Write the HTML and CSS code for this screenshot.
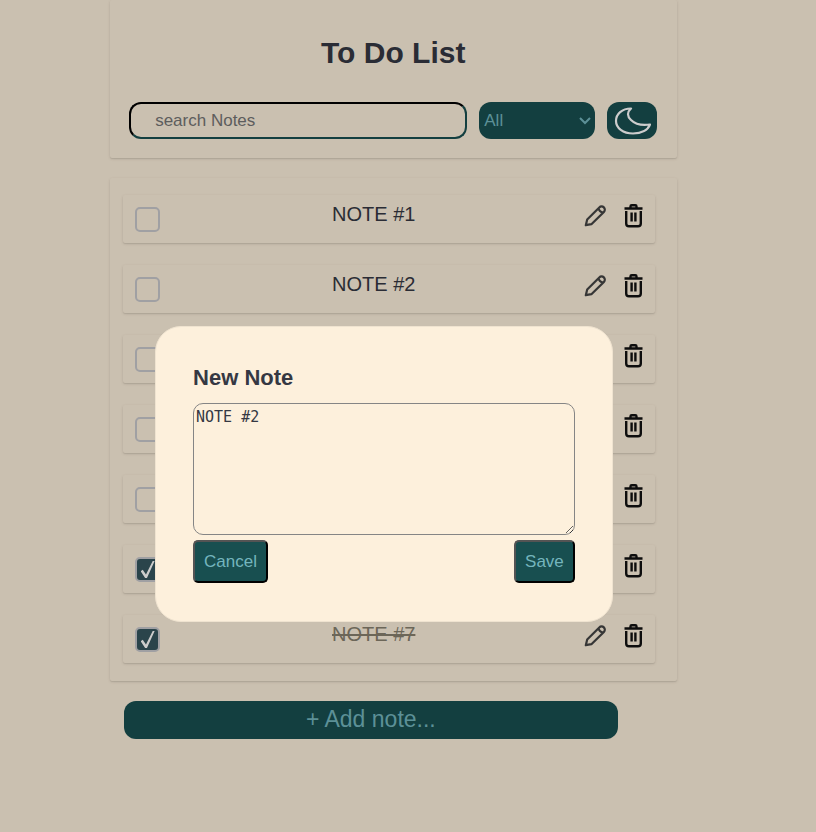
FILE: index.html
```html
<!DOCTYPE html>
<html lang="en">
<head>
<meta charset="utf-8">
<meta name="viewport" content="width=device-width, initial-scale=1">
<title>To Do List</title>
<link rel="stylesheet" href="styles.css">
</head>
<body>
<svg class="sprite" aria-hidden="true">
  <symbol id="pencil" viewBox="0 0 24 24"><path d="M2.800 21.200 4.200 15.600 16.300 3.400a3.200 3.200 0 0 1 4.600 4.500L8.400 20.200ZM15.600 4.200q.3 3.700 4.600 4.300" fill="none" stroke="currentColor" stroke-width="2.200" stroke-linejoin="round"/></symbol>
  <symbol id="trash" viewBox="0 0 24 24"><path d="M3.500 4.500h18M9.500 4V2.500Q9.500 1.300 10.700 1.300h3.600Q15.500 1.300 15.500 2.500V4M5.200 7V19.500Q5.200 22.200 8 22.200h9Q19.800 22.200 19.800 19.500V7M10.600 8.500v9M14.400 8.500v9" fill="none" stroke="currentColor" stroke-width="2.400"/></symbol>
</svg>
<main class="page">
  <header class="panel header">
    <h1 class="title">To Do List</h1>
    <form class="tools">
      <input class="search" type="text" placeholder="search Notes" aria-label="Search notes">
      <div class="filter">
        <select class="filter-select" aria-label="Filter"><option>All</option><option>Complete</option><option>Incomplete</option></select>
        <svg class="chevron" viewBox="0 0 12 8" aria-hidden="true"><path d="M1 1l5 5 5-5" fill="none" stroke="currentColor" stroke-width="2"/></svg>
      </div>
      <button class="theme" type="button" aria-label="Dark mode">
        <svg viewBox="0 0 38 28" aria-hidden="true"><path d="M18 1.500C9 1.500 3 7 3 14s7 12.500 17 12.500c8.500 0 15-3.500 17-9C30 18.500 22.500 17.500 18 13Q12 7 18 1.500Z" fill="none" stroke="currentColor" stroke-width="2.200" stroke-linejoin="round"/></svg>
      </button>
    </form>
  </header>
  <ul class="panel list">
    <li class="note"><input class="check" type="checkbox" id="n1"><label class="text" for="n1">NOTE #1</label><button class="icon" aria-label="Edit"><svg><use href="#pencil"/></svg></button><button class="icon bin" aria-label="Delete"><svg><use href="#trash"/></svg></button></li>
    <li class="note"><input class="check" type="checkbox" id="n2"><label class="text" for="n2">NOTE #2</label><button class="icon" aria-label="Edit"><svg><use href="#pencil"/></svg></button><button class="icon bin" aria-label="Delete"><svg><use href="#trash"/></svg></button></li>
    <li class="note"><input class="check" type="checkbox" id="n3"><label class="text" for="n3">NOTE #3</label><button class="icon" aria-label="Edit"><svg><use href="#pencil"/></svg></button><button class="icon bin" aria-label="Delete"><svg><use href="#trash"/></svg></button></li>
    <li class="note"><input class="check" type="checkbox" id="n4"><label class="text" for="n4">NOTE #4</label><button class="icon" aria-label="Edit"><svg><use href="#pencil"/></svg></button><button class="icon bin" aria-label="Delete"><svg><use href="#trash"/></svg></button></li>
    <li class="note"><input class="check" type="checkbox" id="n5"><label class="text" for="n5">NOTE #5</label><button class="icon" aria-label="Edit"><svg><use href="#pencil"/></svg></button><button class="icon bin" aria-label="Delete"><svg><use href="#trash"/></svg></button></li>
    <li class="note"><input class="check" type="checkbox" id="n6" checked><label class="text" for="n6">NOTE #6</label><button class="icon" aria-label="Edit"><svg><use href="#pencil"/></svg></button><button class="icon bin" aria-label="Delete"><svg><use href="#trash"/></svg></button></li>
    <li class="note"><input class="check" type="checkbox" id="n7" checked><label class="text" for="n7">NOTE #7</label><button class="icon" aria-label="Edit"><svg><use href="#pencil"/></svg></button><button class="icon bin" aria-label="Delete"><svg><use href="#trash"/></svg></button></li>
  </ul>
  <button class="add" type="button">+ Add note...</button>
</main>
<div class="backdrop">
  <form class="dialog" role="dialog" aria-labelledby="dialog-title">
    <h2 class="dialog-title" id="dialog-title">New Note</h2>
    <textarea class="editor" aria-labelledby="dialog-title">NOTE #2</textarea>
    <div class="actions">
      <button class="action" type="button">Cancel</button>
      <button class="action" type="button">Save</button>
    </div>
  </form>
</div>
</body>
</html>
```

FILE: styles.css
```css
:root {
  --cream: #fdf0dc;
  --teal: #184f50;
  --aqua: #74b5bd;
  --ink: #353843;
}

* {
  box-sizing: border-box;
}

body {
  margin: 0;
  background: var(--cream);
  color: var(--ink);
  font: 17px "Liberation Sans", Arial, sans-serif;
}

button,
input,
select {
  margin: 0;
  font: inherit;
}

.sprite {
  position: absolute;
  width: 0;
  height: 0;
}

.page {
  min-height: 100vh;
  padding: 0 17% 40px 13.5%;
}

.panel {
  margin: 0;
  border-radius: 2px;
  box-shadow: 0 1px 3px rgba(0, 0, 0, 0.12), 0 1px 1px rgba(0, 0, 0, 0.06);
}

.header {
  padding: 36px 20px 19px 19px;
}

.title {
  margin: 0 0 32px;
  font-size: 30px;
  line-height: 34px;
  text-align: center;
}

.tools {
  display: flex;
  gap: 12px;
  height: 37px;
}

.search {
  flex: 1;
  min-width: 0;
  padding: 0 24px;
  border: 2px solid;
  border-color: #000 var(--teal) var(--teal) #000;
  border-radius: 12px;
  background: transparent;
}

.search::placeholder {
  color: #757575;
}

.filter {
  position: relative;
  flex: 0 0 116px;
}

.filter-select {
  width: 100%;
  height: 100%;
  padding: 0 5px;
  border: 0;
  border-radius: 12px;
  background: var(--teal);
  color: var(--aqua);
  appearance: none;
}

.chevron {
  position: absolute;
  top: 15px;
  right: 4px;
  width: 12px;
  height: 8px;
  color: var(--aqua);
  pointer-events: none;
}

.theme {
  flex: 0 0 50px;
  display: grid;
  place-items: center;
  padding: 0;
  border: 0;
  border-radius: 12px;
  background: var(--teal);
  color: #fff;
}

.theme svg {
  width: 38px;
  height: 28px;
}

.list {
  display: grid;
  gap: 22px;
  margin-top: 20px;
  padding: 17px 22px 18px 13px;
  list-style: none;
}

.note {
  display: flex;
  align-items: flex-start;
  height: 48px;
  padding: 8px 10px 0 12px;
  border-radius: 2px;
  box-shadow: 0 1px 3px rgba(0, 0, 0, 0.12), 0 1px 1px rgba(0, 0, 0, 0.06);
}

.check {
  display: grid;
  place-items: center;
  width: 25px;
  height: 25px;
  margin: 4px 4px 0 0;
  border: 2px solid #c8c8cc;
  border-radius: 5px;
  appearance: none;
}

.check:checked {
  background: #35565e;
}

.check:checked::before {
  content: "";
  width: 14px;
  height: 17px;
  background: #fff;
  clip-path: polygon(0 61%, 15% 52%, 38% 80%, 86% 0, 100% 0, 45% 100%, 32% 100%);
}

.text {
  flex: 1;
  font-size: 20px;
  line-height: 22px;
  text-align: center;
}

.check:checked + .text {
  color: #87806f;
  text-decoration: line-through;
}

.icon {
  width: 24px;
  height: 26px;
  padding: 1px 0;
  border: 0;
  background: none;
  color: #444;
}

.icon svg {
  display: block;
  width: 24px;
  height: 24px;
}

.bin {
  margin-left: 14px;
  color: #111;
}

.add {
  display: block;
  width: 87%;
  height: 38px;
  margin: 20px 0 0 14px;
  padding: 0 0 2px;
  border: 0;
  border-radius: 12px;
  background: var(--teal);
  color: var(--aqua);
  font-size: 23px;
}

.backdrop {
  position: fixed;
  inset: 0;
  padding: 326px 24.9% 0 19%;
  background: rgba(0, 0, 0, 0.2);
}

.dialog {
  padding: 38px 37px;
  border: 1px solid #efe3d0;
  border-radius: 26px;
  background: var(--cream);
}

.dialog-title {
  margin: 0 0 12px;
  font-size: 22px;
  line-height: 26px;
}

.editor {
  display: block;
  width: 100%;
  height: 132px;
  margin-bottom: 5px;
  padding: 4px 2px;
  border: 1px solid #858585;
  border-radius: 10px;
  background: transparent;
  color: var(--ink);
  font: 15px/18px "DejaVu Sans Mono", monospace;
}

.actions {
  display: flex;
  justify-content: space-between;
}

.action {
  height: 43px;
  padding: 0 9px;
  border: 2px outset #000;
  border-radius: 5px;
  background: var(--teal);
  color: var(--aqua);
}
```
